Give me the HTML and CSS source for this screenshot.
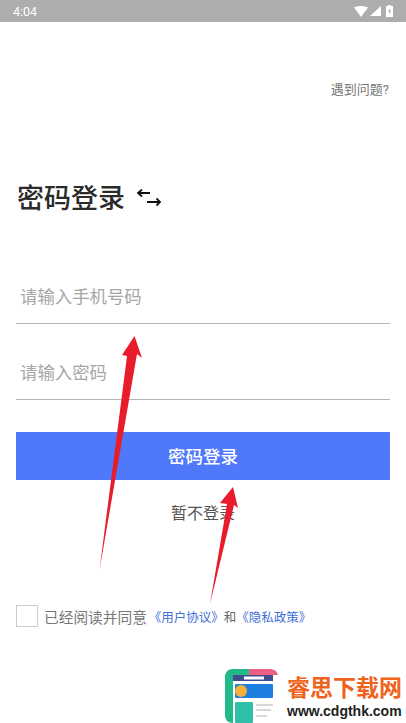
FILE: index.html
```html
<!DOCTYPE html>
<html lang="zh-CN">

<head>
    <meta charset="UTF-8">
    <meta name="viewport" content="width=device-width, initial-scale=1.0">
    <title>密码登录</title>
    <link rel="stylesheet" href="styles.css">
</head>

<body>

    <div class="page">
        <!-- Status bar -->
        <div class="status-bar">
            <span class="time">4:04</span>
            <div class="status-icons">
                <svg width="14" height="11" viewBox="0 0 14 11"><path d="M0 1.5C4-.5 10-.5 14 1.5L7 11Z" fill="#fff"/></svg>
                <svg width="11" height="10" viewBox="0 0 11 10"><path d="M11 0V10H0Z" fill="#fff"/></svg>
                <svg class="battery" width="7" height="12" viewBox="0 0 7 12"><path d="M2 0H5V1H7V12H0V1H2Z" fill="#fff"/><path d="M4 3 2 6.5H3.3L3 9.5 5 5.8H3.7Z" fill="#adadad"/></svg>
            </div>
        </div>

        <div class="help-row">
            <a class="help-link">遇到问题?</a>
        </div>

        <div class="title-row">
            <h1>密码登录</h1>
            <svg width="26" height="20" viewBox="0 0 26 20" fill="none" stroke="#111" stroke-width="1.8">
                <path d="M2 4H14M6 0.500 2 4 6 7.500"/>
                <path d="M11 13H24M20.500 9.500 24 13 20.500 16.500"/>
            </svg>
        </div>

        <!-- Login form -->
        <div class="form">
            <div class="field">请输入手机号码</div>
            <div class="field">请输入密码</div>
            <div class="login-button">密码登录</div>
            <div class="skip">暂不登录</div>
        </div>

        <div class="agreement">
            <span class="checkbox"></span>
            <span>已经阅读并同意</span>
            <span class="links"><a>《用户协议》</a><em>和</em><a>《隐私政策》</a></span>
        </div>

        <!-- Red arrows drawn over the screenshot -->
        <svg class="arrows" width="406" height="723" viewBox="0 0 406 723">
            <path d="M99.500 570 127 356 122 355 134.500 336 142 358 137 354Z" fill="#e81c2b"/>
            <path d="M210 604 227 504 220 503 233 487 238 508 234 505Z" fill="#e81c2b"/>
        </svg>

        <!-- Watermark -->
        <div class="watermark">
            <svg width="53" height="54" viewBox="0 0 53 54">
                <path d="M24 0H8C3 0 0 3 0 8V46C0 51 3 54 8 54V6H24Z" fill="#22b98a"/>
                <path d="M24 0H44C49 0 52 2 53 6H24Z" fill="#ee5f86"/>
                <rect x="8" y="6" width="40" height="6" fill="#3f4d8c"/>
                <rect x="19" y="7.500" width="20" height="3" fill="#fff"/>
                <rect x="10" y="15" width="38" height="14" rx="1" fill="#1f7fe0"/>
                <circle cx="16" cy="22" r="6" fill="#f5b13a"/>
                <rect x="10" y="33" width="18" height="21" rx="1" fill="#30bfa7"/>
                <path d="M31 36H48M31 41H46M31 47H42" stroke="#d7d7d7" stroke-width="2"/>
            </svg>
            <div class="watermark-text">
                <div class="watermark-name">睿思下载网</div>
                <div class="watermark-url">www.cdgthk.com</div>
            </div>
        </div>
    </div>

</body>
</html>
```

FILE: styles.css
```css
body {
    margin: 0;
    background-color: white;
    font-family: "Roboto", "Noto Sans CJK SC", sans-serif;
    color: #333;
}

.page {
    width: 406px;
    height: 723px;
    position: relative;
    overflow: hidden;
}

/* Status bar */
.status-bar {
    height: 22px;
    background-color: #adadad;
    display: flex;
    justify-content: space-between;
    align-items: center;
    padding: 0 13px;
    color: white;
    font-size: 12.5px;
}

.status-icons {
    display: flex;
    align-items: center;
    gap: 2px;
}

.battery {
    margin-left: 3px;
}

/* Help link */
.help-row {
    display: flex;
    justify-content: flex-end;
    padding: 58px 17px 0 0;
    height: 19px;
    line-height: 19px;
}

.help-link {
    font-size: 13px;
    color: #777;
}

/* Title */
.title-row {
    display: flex;
    align-items: center;
    gap: 11px;
    margin: 81px 0 0 17px;
    height: 38px;
}

.title-row h1 {
    margin: 0;
    font-size: 27px;
    font-weight: 500;
    line-height: 38px;
    color: #2b2b2b;
}

/* Form */
.form {
    margin: 48px 16px 0;
}

.field {
    height: 57px;
    line-height: 62px;
    margin-top: 18px;
    padding-left: 4px;
    border-bottom: 1px solid #b5b5b5;
    font-size: 17.4px;
    color: #a6a6a6;
}

.field:first-child {
    margin-top: 0;
}

.login-button {
    height: 48px;
    line-height: 50px;
    margin-top: 32px;
    background-color: #4f78fb;
    color: white;
    text-align: center;
    font-size: 17.5px;
    font-weight: 500;
}

.skip {
    margin-top: 23px;
    line-height: 22px;
    text-align: center;
    font-size: 16px;
    color: #555;
}

/* Agreement row */
.agreement {
    display: flex;
    align-items: center;
    margin: 80px 0 0 16px;
    font-size: 14.700px;
    color: #777;
}

.checkbox {
    width: 20px;
    height: 20px;
    border: 1px solid #ccc;
    margin-right: 6px;
}

.links {
    margin-left: 2px;
    font-size: 12.500px;
    display: flex;
}

.links a {
    color: #3f6fd8;
}

.links em {
    font-style: normal;
    color: #666;
}

/* Overlays */
.arrows {
    position: absolute;
    top: 0;
    left: 0;
}

.watermark {
    position: absolute;
    top: 669px;
    left: 225px;
    display: flex;
    gap: 9px;
    align-items: center;
}

.watermark-name {
    font-size: 23px;
    line-height: 29px;
    font-weight: 700;
    color: #f0631c;
}

.watermark-url {
    font-family: "Liberation Sans", sans-serif;
    font-size: 14px;
    line-height: 16px;
    font-weight: 700;
    color: #222;
}
```
